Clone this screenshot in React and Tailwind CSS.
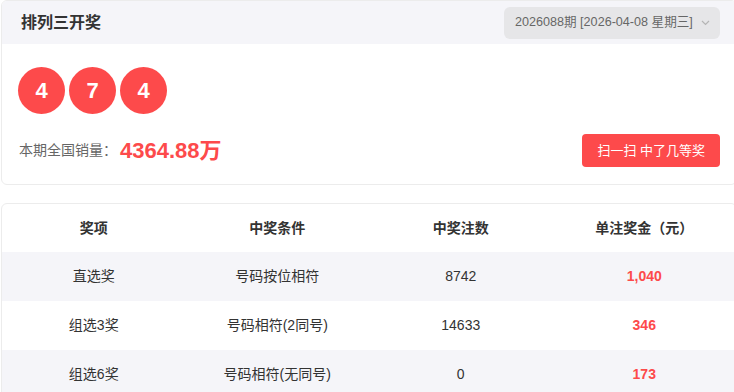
import React from 'react';

const balls = [4, 7, 4];

const rows = [
  { name: '直选奖', rule: '号码按位相符', count: '8742', prize: '1,040' },
  { name: '组选3奖', rule: '号码相符(2同号)', count: '14633', prize: '346' },
  { name: '组选6奖', rule: '号码相符(无同号)', count: '0', prize: '173' },
];

const font = { fontFamily: '"Liberation Sans", "Noto Sans CJK SC", sans-serif' };

const App = () => {
  return (
    <div className="w-[734px] h-[392px] overflow-hidden bg-white" style={font}>
      <div className="ml-px w-[736px]">
        {/* 开奖结果 */}
        <div className="border border-[#ececec] rounded-md overflow-hidden">
          <div className="h-[43px] bg-[#f5f5f9] flex items-center justify-between pl-[19px] pr-[16px]">
            <h2 className="text-[16px] font-bold text-[#333]">排列三开奖</h2>
            <div className="h-[32px] w-[216px] bg-[#e6e6e8] rounded-md flex items-center justify-between pl-[11px] pr-[10px] text-[12.6px] text-[#666]">
              <span>2026088期 [2026-04-08 星期三]</span>
              <svg width="9" height="6" viewBox="0 0 9 6" fill="none" stroke="#b5b5b5" strokeWidth="1.2">
                <path d="M1 1l3.5 3.5L8 1" />
              </svg>
            </div>
          </div>
          <div className="pl-[16px] pr-[16px] pt-[23px] pb-[17px]">
            <div className="flex gap-[4px]">
              {balls.map((n, i) => (
                <div
                  key={i}
                  className="w-[47px] h-[47px] rounded-full bg-[#fd4a4b] text-white font-bold text-[22px] flex items-center justify-center"
                >
                  {n}
                </div>
              ))}
            </div>
            <div className="mt-[20px] flex items-center justify-between">
              <div className="flex items-center pl-[1px]">
                <span className="text-[14px] text-[#666]">本期全国销量：</span>
                <span className="text-[22px] font-bold text-[#fd4a4b] ml-[3px]">4364.88万</span>
              </div>
              <button className="h-[33px] px-[15px] bg-[#fd4a4b] text-white text-[13px] rounded-[4px]">
                扫一扫 中了几等奖
              </button>
            </div>
          </div>
        </div>

        {/* 奖金表 */}
        <div className="mt-[18px] border border-[#ececec] rounded-md overflow-hidden">
          <div className="grid grid-cols-4 h-[48px] items-center text-center text-[14px] font-bold text-[#333]">
            <div>奖项</div>
            <div>中奖条件</div>
            <div>中奖注数</div>
            <div>单注奖金（元）</div>
          </div>
          {rows.map((r, i) => (
            <div
              key={r.name}
              className={`grid grid-cols-4 h-[49px] items-center text-center text-[14px] text-[#333] ${
                i % 2 === 0 ? 'bg-[#f5f5f9]' : 'bg-white'
              }`}
            >
              <div>{r.name}</div>
              <div>{r.rule}</div>
              <div>{r.count}</div>
              <div className="font-bold text-[#fd4a4b]">{r.prize}</div>
            </div>
          ))}
        </div>
      </div>
    </div>
  );
};

export default App;
